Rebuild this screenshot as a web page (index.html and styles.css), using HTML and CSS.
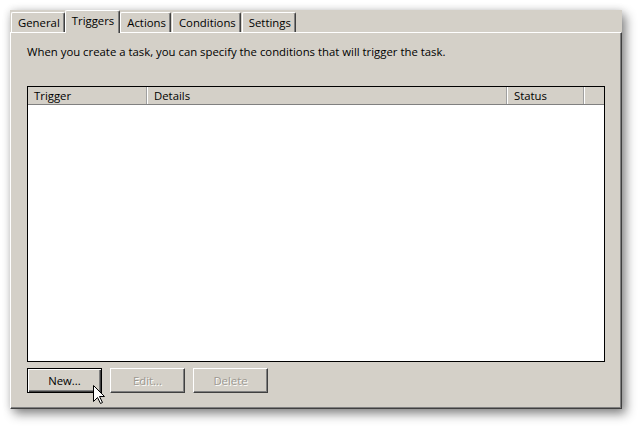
FILE: index.html
```html
<!DOCTYPE html>
<html>
<head>
<meta charset="utf-8">
<link rel="stylesheet" href="styles.css">
</head>
<body>
<div class="window">
  <div class="tabs">
    <div class="tab tab-general">General</div>
    <div class="tab tab-active">Triggers</div>
    <div class="tab">Actions</div>
    <div class="tab">Conditions</div>
    <div class="tab">Settings</div>
  </div>
  <div class="panel">
    <p class="intro">When you create a task, you can specify the conditions that will trigger the task.</p>
    <div class="list">
      <div class="list-head">
        <div class="col col-trigger">Trigger</div>
        <div class="col col-details">Details</div>
        <div class="col col-status">Status</div>
        <div class="col col-fill"></div>
      </div>
    </div>
    <div class="buttons">
      <button class="btn btn-default">New...</button>
      <button class="btn" disabled>Edit...</button>
      <button class="btn" disabled>Delete</button>
      <svg class="cursor" width="13" height="20" viewBox="0 0 13 20">
        <path d="M0.5 0.5 L0.5 16.5 L4.5 12.5 L7.5 18.5 L9.5 17.5 L6.5 11.5 L11.5 11.5 Z" fill="#fff" stroke="#000" stroke-width="1" stroke-linejoin="miter"/>
      </svg>
    </div>
  </div>
</div>
</body>
</html>
```
FILE: styles.css
```css
* { box-sizing: border-box; }
html, body { margin: 0; padding: 0; background: #fff; }
body {
  font-family: "Open Sans", "Noto Sans", sans-serif;
  font-size: 11.35px;
  color: #000;
  width: 640px;
  height: 428px;
  overflow: hidden;
}
.window {
  margin: 10px 0 0 10px;
  width: 612px;
  height: 399px;
  background: #d4d0c8;
  display: flex;
  flex-direction: column;
  box-shadow: 4px 5px 10px rgba(0,0,0,0.45), 0 0 8px rgba(0,0,0,0.12);
}
.tabs {
  display: flex;
  align-items: flex-end;
  height: 22px;
  padding-left: 1px;
  gap: 1px;
}
.tab {
  height: 20px;
  line-height: 20px;
  padding: 0 4px 0 6px;
  border-left: 1px solid #fff;
  border-top: 1px solid #fff;
  border-right: 1px solid #404040;
  border-top-left-radius: 2px;
  border-top-right-radius: 2px;
  box-shadow: inset -1px 0 0 #808080;
  white-space: nowrap;
}
.tab-active {
  height: 23px;
  margin-bottom: -1px;
  margin-left: -1px;
  margin-right: -1px;
  line-height: 19px;
  padding: 0 5px 0 6px;
  background: #d4d0c8;
  position: relative;
  z-index: 1;
}
.panel {
  flex: 1;
  border-top: 1px solid #fff;
  border-left: 1px solid #fff;
  border-right: 1px solid #404040;
  border-bottom: 1px solid #404040;
  box-shadow: inset -1px -1px 0 #808080;
  padding: 10px 16px 0 16px;
  display: flex;
  flex-direction: column;
}
.intro {
  margin: 0;
  line-height: 16px;
  height: 16px;
  padding-top: 1px;
  white-space: nowrap;
}
.list {
  margin-top: 27px;
  height: 276px;
  border: 1px solid #000;
  background: #fff;
}
.list-head {
  display: flex;
  height: 18px;
  background: #d4d0c8;
  border-bottom: 1px solid #808080;
}
.col {
  line-height: 18px;
  padding-left: 6px;
  border-right: 1px solid #fff;
  box-shadow: inset -1px 0 0 #a0a0a0;
}
.col-trigger { width: 120px; }
.col-details { width: 360px; }
.col-status { width: 77px; }
.col-fill { flex: 1; border-right: none; box-shadow: none; }
.buttons {
  margin-top: 6px;
  display: flex;
  gap: 8px;
  position: relative;
}
.btn {
  width: 75px;
  height: 25px;
  font: inherit;
  color: #000;
  background: #d4d0c8;
  border: 1px solid;
  border-color: #fff #404040 #404040 #fff;
  box-shadow: inset -1px -1px 0 #808080;
  padding: 0;
  margin: 0;
}
.btn-default {
  border: 1px solid #000;
  box-shadow: inset 1px 1px 0 #fff, inset -1px -1px 0 #404040, inset -2px -2px 0 #808080;
}
.btn:disabled {
  color: #9c9890;
  text-shadow: 1px 1px 0 #fff;
}
.cursor {
  position: absolute;
  left: 66px;
  top: 17px;
}
```
